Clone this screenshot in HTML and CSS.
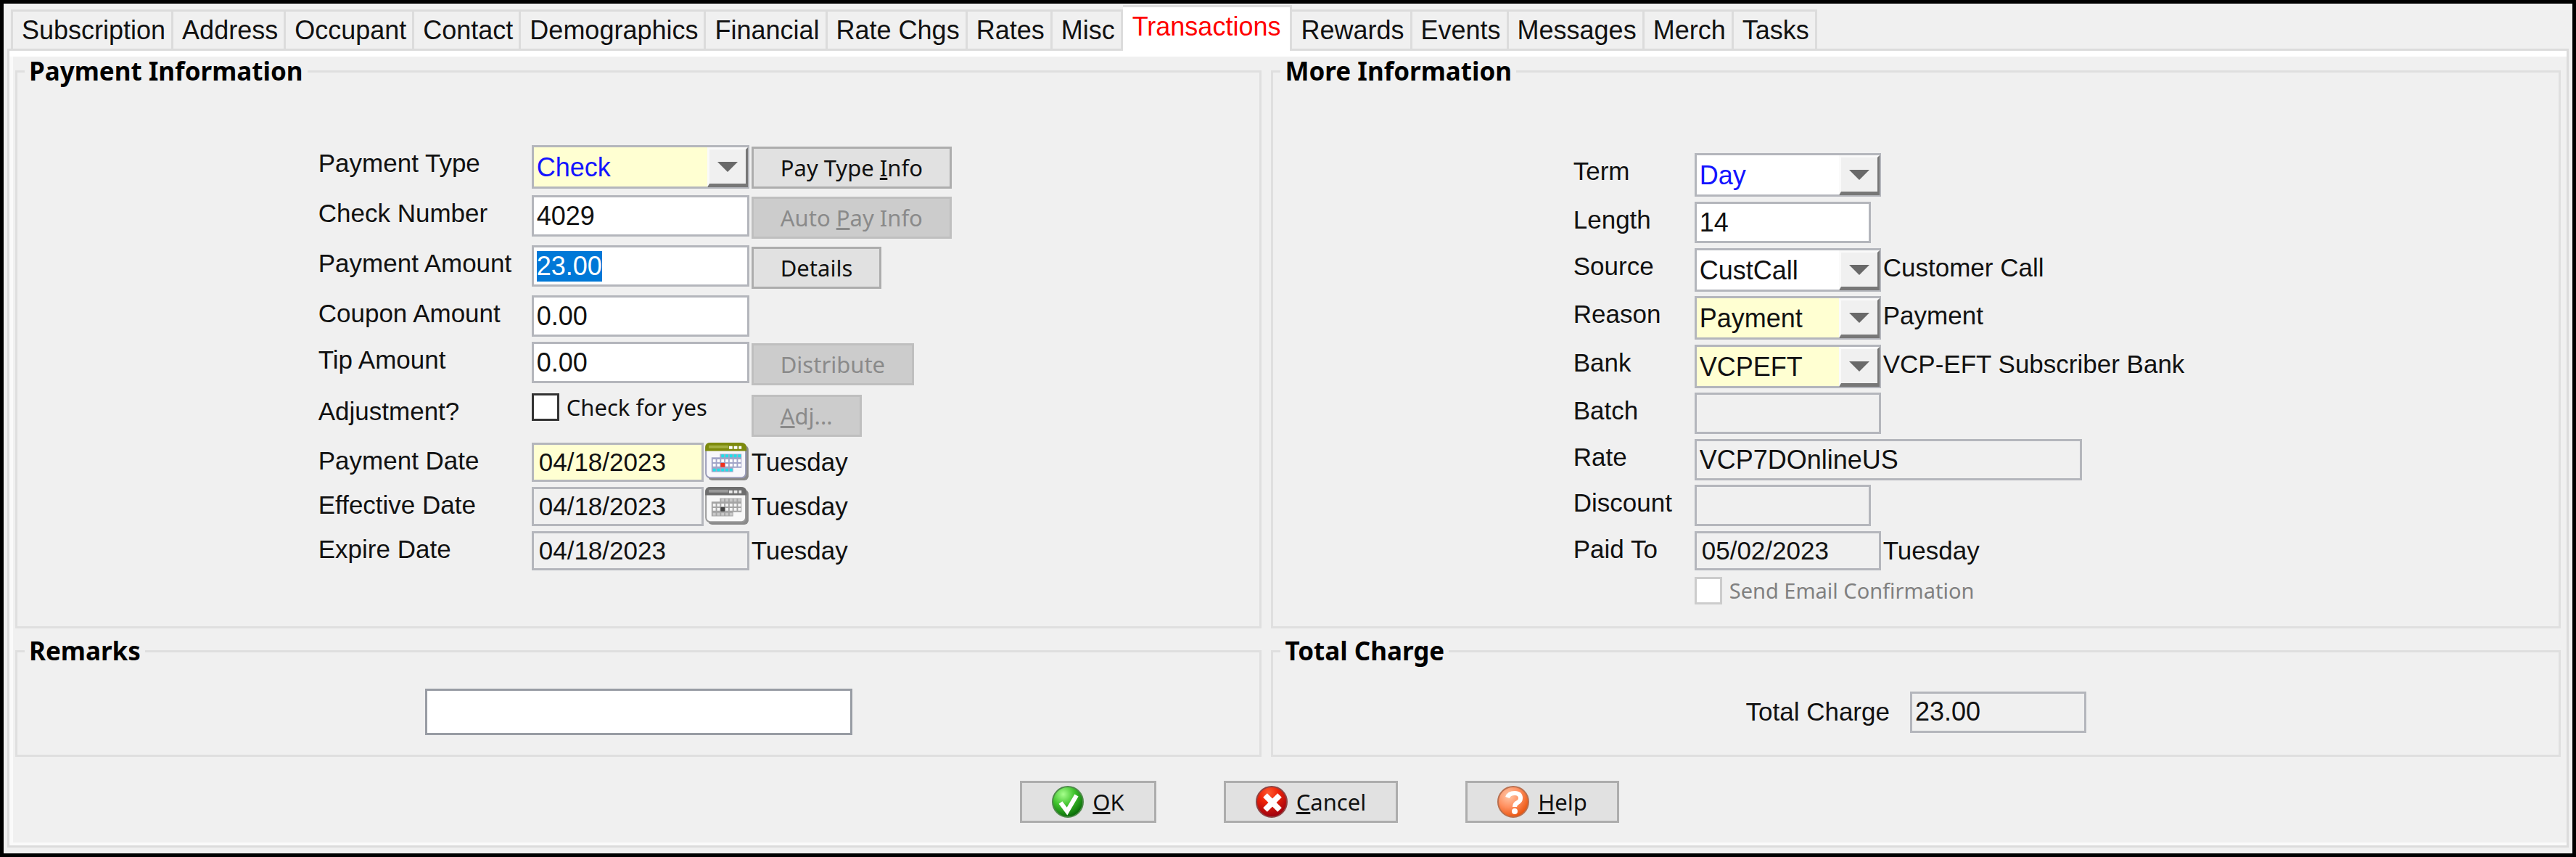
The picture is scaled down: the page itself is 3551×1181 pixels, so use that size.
FILE: index.html
```html
<!DOCTYPE html>
<html lang="en">
<head>
    <meta charset="UTF-8">
    <meta name="viewport" content="width=device-width, initial-scale=1.0">
    <title>Transactions</title>
    <link rel="stylesheet" href="styles.css">
</head>
<body>
<div class="window">
    <nav class="tabs">
        <button type="button" class="tab">Subscription</button>
        <button type="button" class="tab">Address</button>
        <button type="button" class="tab">Occupant</button>
        <button type="button" class="tab">Contact</button>
        <button type="button" class="tab">Demographics</button>
        <button type="button" class="tab">Financial</button>
        <button type="button" class="tab">Rate Chgs</button>
        <button type="button" class="tab">Rates</button>
        <button type="button" class="tab">Misc</button>
        <button type="button" class="tab active">Transactions</button>
        <button type="button" class="tab">Rewards</button>
        <button type="button" class="tab">Events</button>
        <button type="button" class="tab">Messages</button>
        <button type="button" class="tab">Merch</button>
        <button type="button" class="tab">Tasks</button>
    </nav>

    <form class="pane">
        <div class="groups">
            <fieldset>
                <legend>Payment Information</legend>
                <div class="rows payment">
                    <label for="payType">Payment Type</label>
                    <div class="field">
                        <div class="combo wide">
                            <select id="payType" class="required blue"><option>Check</option></select>
                            <span class="arrow"></span>
                        </div>
                        <button type="button" class="btn">Pay Type <u>I</u>nfo</button>
                    </div>

                    <label for="checkNumber">Check Number</label>
                    <div class="field">
                        <input id="checkNumber" class="wide" type="text" value="4029">
                        <button type="button" class="btn" disabled>Auto <u>P</u>ay Info</button>
                    </div>

                    <label for="amount">Payment Amount</label>
                    <div class="field">
                        <input id="amount" class="wide" type="text" value="23.00">
                        <button type="button" class="btn">Details</button>
                    </div>

                    <label for="coupon">Coupon Amount</label>
                    <div class="field">
                        <input id="coupon" class="wide" type="text" value="0.00">
                    </div>

                    <label for="tip">Tip Amount</label>
                    <div class="field">
                        <input id="tip" class="wide" type="text" value="0.00">
                        <button type="button" class="btn" disabled>Distribute</button>
                    </div>

                    <span class="caption">Adjustment?</span>
                    <div class="field">
                        <label class="check wide"><input type="checkbox">Check for yes</label>
                        <button type="button" class="btn" disabled><u>A</u>dj...</button>
                    </div>

                    <label for="payDate">Payment Date</label>
                    <div class="field">
                        <div class="date">
                            <input id="payDate" class="required" type="text" value="04/18/2023">
                            <button type="button" class="calendar" aria-label="Pick payment date">
                                <svg viewBox="0 0 62 54">
                                    <rect x="4" y="4" width="58" height="50" rx="6" fill="#8a8a8a"/>
                                    <rect x="1" y="1" width="57" height="49" rx="6" fill="#f7f7fb" stroke="#9a9cb8" stroke-width="2"/>
                                    <path d="M0 12V7q0-7 7-7h44q8 0 8 7v5z" fill="#7d8a0c"/>
                                    <path d="M5 6h28" stroke="#a3b040" stroke-width="4"/>
                                    <path d="M34 7h18" stroke="#fff" stroke-width="4" stroke-dasharray="5 2"/>
                                    <path d="M21 16h31v20H40v6H9V21h12z" fill="#a2a5c8"/>
                                    <path d="M23 19h28" stroke="#1fe0e8" stroke-width="4" stroke-dasharray="4 2"/>
                                    <path d="M11 26h40M11 32h40" stroke="#fff" stroke-width="4" stroke-dasharray="4 2"/>
                                    <path d="M11 39h28" stroke="#1fe0e8" stroke-width="4" stroke-dasharray="4 2"/>
                                    <rect x="22" y="29" width="6" height="6" fill="#f0301c"/>
                                </svg>
                            </button>
                        </div>
                        <span class="note">Tuesday</span>
                    </div>

                    <label for="effDate">Effective Date</label>
                    <div class="field">
                        <div class="date">
                            <input id="effDate" type="text" value="04/18/2023" readonly>
                            <button type="button" class="calendar" aria-label="Pick effective date" disabled>
                                <svg viewBox="0 0 62 54">
                                    <rect x="4" y="4" width="58" height="50" rx="6" fill="#8a8a8a"/>
                                    <rect x="1" y="1" width="57" height="49" rx="6" fill="#f8f8f8" stroke="#999" stroke-width="2"/>
                                    <path d="M0 12V7q0-7 7-7h44q8 0 8 7v5z" fill="#6e6e6e"/>
                                    <path d="M5 6h28" stroke="#999" stroke-width="4"/>
                                    <path d="M34 7h18" stroke="#e8e8e8" stroke-width="4" stroke-dasharray="5 2"/>
                                    <path d="M21 16h31v20H40v6H9V21h12z" fill="#a4a4a4"/>
                                    <path d="M23 19h28M11 39h28" stroke="#c8c8c8" stroke-width="4" stroke-dasharray="4 2"/>
                                    <path d="M11 26h40M11 32h40" stroke="#f4f4f4" stroke-width="4" stroke-dasharray="4 2"/>
                                    <rect x="22" y="29" width="6" height="6" fill="#444"/>
                                </svg>
                            </button>
                        </div>
                        <span class="note">Tuesday</span>
                    </div>

                    <label for="expDate">Expire Date</label>
                    <div class="field">
                        <div class="date">
                            <input id="expDate" type="text" value="04/18/2023" readonly>
                        </div>
                        <span class="note">Tuesday</span>
                    </div>
                </div>
            </fieldset>

            <fieldset>
                <legend>More Information</legend>
                <div class="rows more">
                    <label for="term">Term</label>
                    <div class="field">
                        <div class="combo">
                            <select id="term" class="blue"><option>Day</option></select>
                            <span class="arrow"></span>
                        </div>
                    </div>

                    <label for="length">Length</label>
                    <div class="field">
                        <input id="length" class="short" type="text" value="14">
                    </div>

                    <label for="source">Source</label>
                    <div class="field">
                        <div class="combo">
                            <select id="source"><option>CustCall</option></select>
                            <span class="arrow"></span>
                        </div>
                        <span class="note">Customer Call</span>
                    </div>

                    <label for="reason">Reason</label>
                    <div class="field">
                        <div class="combo">
                            <select id="reason" class="required"><option>Payment</option></select>
                            <span class="arrow"></span>
                        </div>
                        <span class="note">Payment</span>
                    </div>

                    <label for="bank">Bank</label>
                    <div class="field">
                        <div class="combo">
                            <select id="bank" class="required"><option>VCPEFT</option></select>
                            <span class="arrow"></span>
                        </div>
                        <span class="note">VCP-EFT Subscriber Bank</span>
                    </div>

                    <label for="batch">Batch</label>
                    <div class="field"><input id="batch" type="text" readonly></div>

                    <label for="rate">Rate</label>
                    <div class="field"><input id="rate" class="long" type="text" value="VCP7DOnlineUS" readonly></div>

                    <label for="discount">Discount</label>
                    <div class="field"><input id="discount" class="short" type="text" readonly></div>

                    <label for="paidTo">Paid To</label>
                    <div class="field">
                        <div class="date">
                            <input id="paidTo" type="text" value="05/02/2023" readonly>
                        </div>
                        <span class="note">Tuesday</span>
                    </div>

                    <label class="check send"><input type="checkbox" disabled>Send Email Confirmation</label>
                </div>
            </fieldset>

            <fieldset>
                <legend>Remarks</legend>
                <div class="single">
                    <input class="remarks" type="text" aria-label="Remarks">
                </div>
            </fieldset>

            <fieldset>
                <legend>Total Charge</legend>
                <div class="single">
                    <label for="total">Total Charge</label>
                    <input id="total" class="short" type="text" value="23.00" readonly>
                </div>
            </fieldset>
        </div>

        <div class="actions">
            <button type="button" class="btn">
                <svg viewBox="0 0 44 46">
                    <defs>
                        <radialGradient id="green" cx="35%" cy="25%" r="75%">
                            <stop offset="0" stop-color="#a6ff8c"/>
                            <stop offset="0.5" stop-color="#3fc22c"/>
                            <stop offset="1" stop-color="#0a6e08"/>
                        </radialGradient>
                    </defs>
                    <circle cx="22" cy="23" r="21" fill="url(#green)" stroke="#4e8a4a" stroke-width="2"/>
                    <path d="M12 24l9 12L34 14" fill="none" stroke="#fff" stroke-width="6"/>
                </svg>
                <span><u>O</u>K</span>
            </button>
            <button type="button" class="btn">
                <svg viewBox="0 0 44 46">
                    <defs>
                        <radialGradient id="red" cx="40%" cy="20%" r="80%">
                            <stop offset="0" stop-color="#ff5a30"/>
                            <stop offset="0.4" stop-color="#ee2408"/>
                            <stop offset="1" stop-color="#9c0010"/>
                        </radialGradient>
                    </defs>
                    <circle cx="22" cy="23" r="21" fill="url(#red)" stroke="#8e4444" stroke-width="2"/>
                    <path d="M13 14l20 20M33 14L13 34" stroke="#fff" stroke-width="8"/>
                </svg>
                <span><u>C</u>ancel</span>
            </button>
            <button type="button" class="btn">
                <svg viewBox="0 0 44 46">
                    <defs>
                        <radialGradient id="orange" cx="35%" cy="30%" r="75%">
                            <stop offset="0" stop-color="#ffc8a8"/>
                            <stop offset="0.5" stop-color="#ff9060"/>
                            <stop offset="1" stop-color="#e85008"/>
                        </radialGradient>
                    </defs>
                    <circle cx="22" cy="23" r="21" fill="url(#orange)" stroke="#b87050" stroke-width="2"/>
                    <path d="M14 17q2-6 10-6t8 7q0 4-4 6t-4 6" fill="none" stroke="#fff" stroke-width="6"/>
                    <circle cx="24" cy="36" r="4" fill="#fff"/>
                </svg>
                <span><u>H</u>elp</span>
            </button>
        </div>
    </form>
</div>
<script>
    // the amount is ready to be typed over
    const amount = document.querySelector("#amount");
    amount.focus();
    amount.select();
</script>
</body>
</html>
```

FILE: styles.css
```css
* {
    box-sizing: border-box;
}

body {
    margin: 0;
    background-color: #f0f0f0;
    color: #111;
    font-family: "Liberation Sans", Arial, sans-serif;
    font-size: 35px;
}

.window {
    display: flex;
    flex-direction: column;
    min-height: 100vh;
    border: 5px solid black;
    padding: 2px 5px 8px;
}

/* tabs */
.tabs {
    display: flex;
    align-items: flex-end;
    padding-left: 5px;
}

.tab {
    height: 54px;
    padding: 0 8px 0 12px;
    border: 0 solid #dcdcdc;
    border-width: 3px 3px 0 0;
    background: none;
    color: #111;
    font-family: inherit;
    font-size: 36px;
    line-height: 48px;
}

.tab:first-child {
    border-left-width: 3px;
}

.tab.active {
    height: 63px;
    margin-bottom: -3px;
    padding: 0 13px 6px 13px;
    background-color: white;
    color: red;
    z-index: 1;
}

.pane {
    flex: 1;
    border: 3px solid #dcdcdc;
    padding: 10px 6px 0;
    box-shadow: inset 0 8px white, inset 5px 0 #fafafa, inset 0 -4px #fafafa;
}

/* groups */
.groups {
    display: grid;
    grid-template-columns: 1717fr 1776fr;
    gap: 13px;
    padding: 0 2px;
}

fieldset {
    min-width: 0;
    margin: 0;
    padding: 0;
    border: 3px solid #dfdfdf;
}

legend {
    margin-left: 10px;
    padding: 0 6px;
    color: black;
    font-family: "Noto Sans", sans-serif;
    font-size: 35px;
    font-weight: bold;
    line-height: 36px;
}

.rows {
    display: grid;
    justify-content: center;
    align-items: start;
    line-height: 50px;
    white-space: nowrap;
}

.payment {
    grid-template-columns: 294px 589px;
    grid-template-rows: repeat(3, 69px) 64px 71px 68px repeat(2, 61px) 54px;
    padding: 84px 0 77px;
}

.more {
    grid-template-columns: 167px 778px;
    grid-template-rows: 67px 64px 66px 67px 66px 64px 63px 64px 63px 38px;
    padding-top: 95px;
}

.single {
    display: flex;
    align-items: center;
    justify-content: center;
    gap: 28px;
    padding: 34px 0 27px;
    min-height: 125px;
    line-height: 50px;
}

.field {
    display: flex;
    align-items: flex-start;
    gap: 3px;
}

/* inputs */
input[type="text"], select {
    width: 257px;
    height: 57px;
    margin: 0;
    border: 3px solid #b4b6bc;
    border-radius: 0;
    padding: 0 4px;
    background-color: white;
    color: #111;
    font-family: inherit;
    font-size: 36px;
    line-height: 47px;
    outline: none;
}

select {
    height: 60px;
    appearance: none;
}

input[type="text"]:read-only {
    background-color: #f0f0f0;
}

input[type="text"]::selection {
    background-color: #0078d7;
    color: white;
}

.wide, input[type="text"].wide, .wide select {
    width: 300px;
}

input[type="text"].short {
    width: 243px;
}

input[type="text"].long {
    width: 534px;
}

input[type="text"].remarks {
    width: 589px;
    height: 64px;
    border-color: #989ca4;
}

input[type="text"].required, select.required {
    background-color: #ffffd2;
}

select.blue {
    color: #1414ff;
}

.combo {
    position: relative;
}

/* raised drop-down button over the right end of the select */
.arrow {
    position: absolute;
    top: 3px;
    right: 2px;
    display: flex;
    align-items: center;
    justify-content: center;
    width: 56px;
    height: 55px;
    border: 3px solid;
    border-color: #fafafa #777 #777 #fafafa;
    border-bottom-width: 5px;
    background-color: #f0f0f0;
    pointer-events: none;
}

.arrow::before {
    content: "";
    border: 14px solid transparent;
    border-top-color: #696969;
    border-bottom-width: 0;
}

.date {
    display: flex;
    gap: 1px;
}

.payment .date {
    width: 300px;
}

.date input[type="text"] {
    flex: 1;
    min-width: 0;
    height: 54px;
    padding-left: 7px;
    font-size: 35px;
}

.calendar {
    width: 62px;
    height: 52px;
    border: 0;
    padding: 0;
    background: none;
}

.calendar svg {
    display: block;
    width: 62px;
    height: 52px;
}

.note {
    line-height: 54px;
}

.check {
    display: flex;
    align-items: center;
    gap: 10px;
    font-family: "Noto Sans", sans-serif;
    font-size: 31px;
    line-height: 38px;
}

.check input {
    appearance: none;
    width: 38px;
    height: 38px;
    margin: 0;
    border: 3px solid #333;
    background-color: white;
}

.send {
    grid-column: 2;
    color: #808080;
    font-size: 29px;
}

.check input:disabled {
    border-color: #ccc;
}

/* buttons */
.btn {
    height: 58px;
    border: 3px solid #adadad;
    padding: 0 37px;
    background-color: #e1e1e1;
    color: #111;
    font-family: "Noto Sans", sans-serif;
    font-size: 31px;
    line-height: 44px;
}

.field .btn {
    margin-top: 2px;
}

.btn:disabled {
    border-color: #bfbfbf;
    background-color: #ccc;
    color: #8a8a8a;
}

.actions {
    display: flex;
    justify-content: center;
    gap: 93px;
    padding: 33px 0 0 87px;
}

.actions .btn {
    display: flex;
    align-items: center;
    gap: 12px;
    padding: 0 41px;
}

.actions svg {
    width: 44px;
    height: 46px;
}
```
